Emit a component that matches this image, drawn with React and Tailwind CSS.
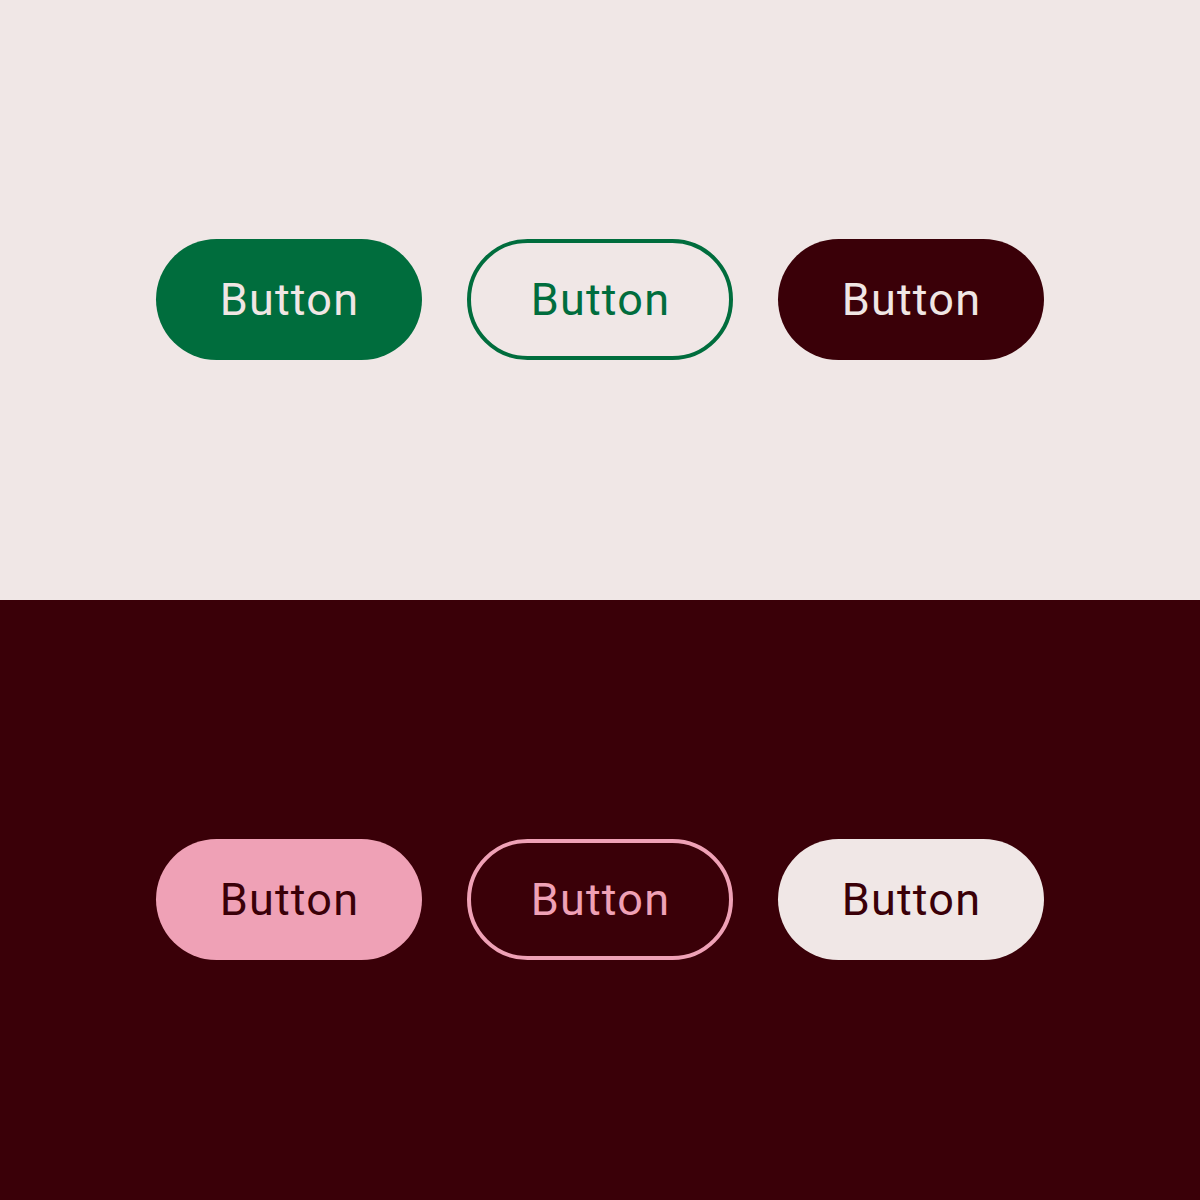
const font = { fontFamily: 'Roboto, "Noto Sans", sans-serif' };

function Pill({ className }) {
  return (
    <button
      className={`w-[266px] h-[121px] rounded-full flex items-center justify-center text-[45px] leading-none tracking-[1.2px] pl-[1px] ${className}`}
      style={font}
    >
      Button
    </button>
  );
}

export default function App() {
  return (
    <div className="w-[1200px] h-[1200px] flex flex-col">
      <section className="h-[600px] bg-[#f0e7e6] flex items-center justify-center gap-[45px] pb-[2px]">
        <Pill className="bg-[#006d3d] text-[#f0e6e4]" />
        <Pill className="border-4 border-[#006d3d] text-[#006d3d]" />
        <Pill className="bg-[#3a0008] text-[#f0e6e4]" />
      </section>
      <section className="h-[600px] bg-[#3a0008] flex items-center justify-center gap-[45px] pb-[2px]">
        <Pill className="bg-[#efa1b6] text-[#3a0008]" />
        <Pill className="border-4 border-[#efa1b6] text-[#efa1b6]" />
        <Pill className="bg-[#f0e7e6] text-[#3a0008]" />
      </section>
    </div>
  );
}
